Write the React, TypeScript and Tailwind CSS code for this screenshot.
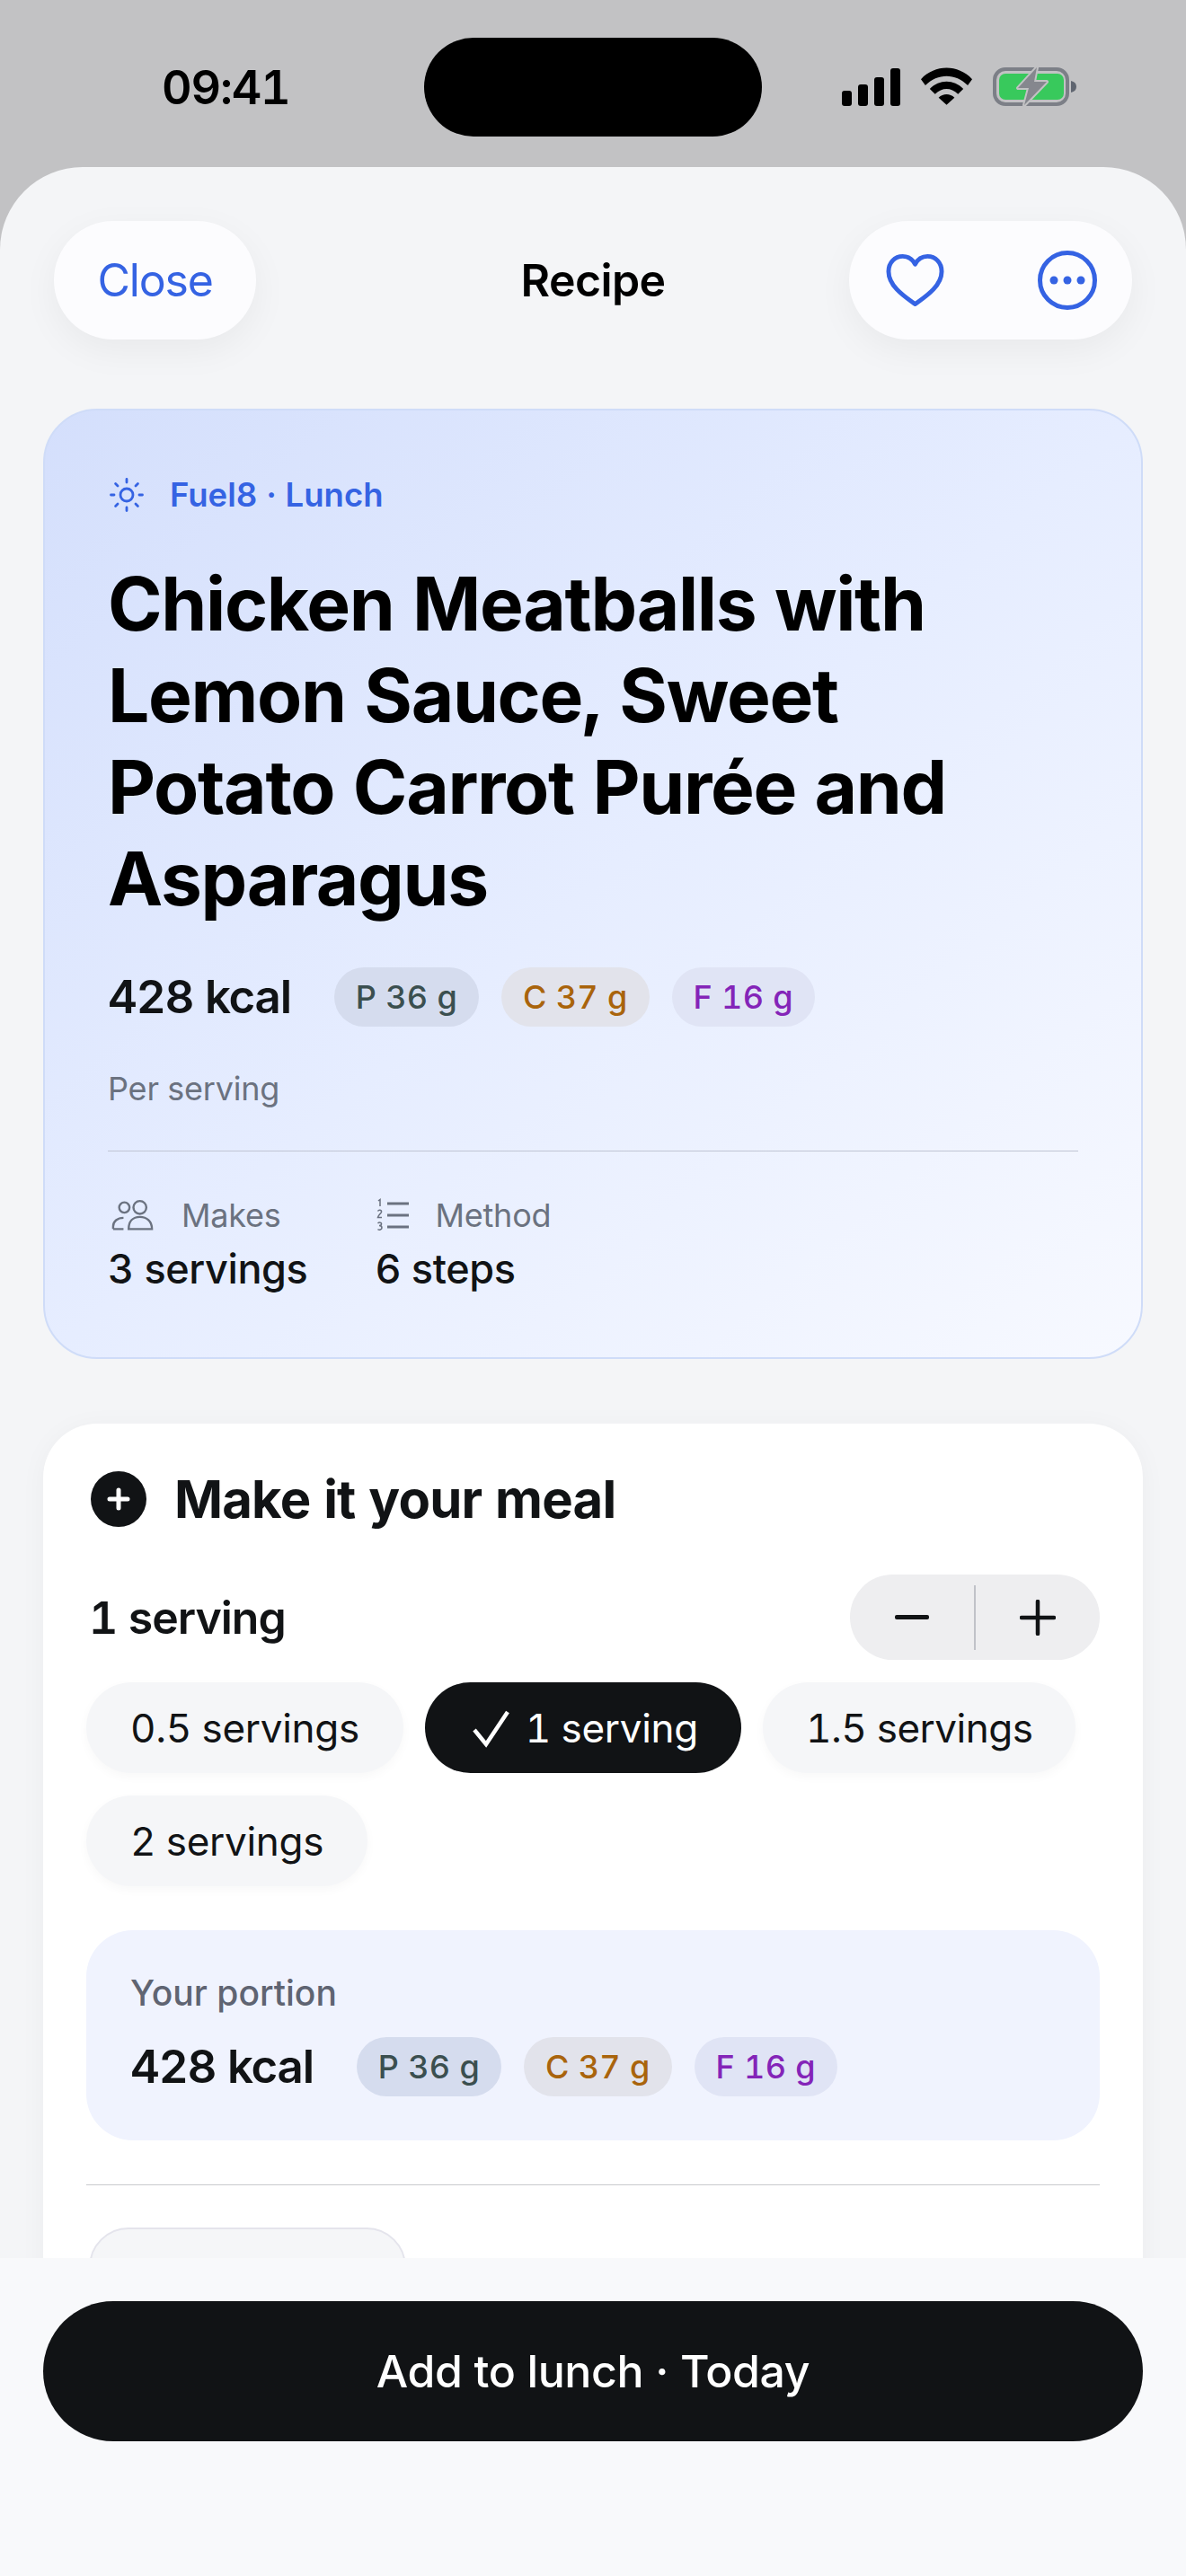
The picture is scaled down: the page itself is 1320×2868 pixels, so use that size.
import React from "react";

function Chips() {
  const base = "h-[66px] px-[24px] rounded-full flex items-center text-[36px] font-medium tracking-[0.3px]";
  return (
    <div className="flex items-center gap-[25px]">
      <span className={`${base} bg-[#d5dcee] text-[#3b4f4f]`}>P 36 g</span>
      <span className={`${base} bg-[#e2e3eb] text-[#a9640c]`}>C 37 g</span>
      <span className={`${base} bg-[#e0e4f5] text-[#8424b8]`}>F 16 g</span>
    </div>
  );
}

function Pill({ children, active, tight }: { children: React.ReactNode; active?: boolean; tight?: boolean }) {
  if (active) {
    return (
      <div className="h-[101px] pl-[52px] pr-[48px] rounded-full bg-[#111315] text-white flex items-center text-[44px] tracking-[-0.3px] gap-[16px]">
        {children}
      </div>
    );
  }
  return (
    <div
      className={
        tight
          ? "h-[101px] px-[48px] rounded-full bg-[#f5f6f8] text-[#111315] flex items-center text-[44px] tracking-[-0.5px] shadow-[0_4px_12px_rgba(0,0,0,0.03)]"
          : "h-[101px] px-[49px] rounded-full bg-[#f5f6f8] text-[#111315] flex items-center text-[44px] tracking-[-0.3px] shadow-[0_4px_12px_rgba(0,0,0,0.03)]"
      }
    >
      {children}
    </div>
  );
}

export default function App() {
  return (
    <div className="relative w-[1320px] h-[2868px] overflow-hidden bg-[#c2c2c4] font-['Inter',sans-serif] tabular-nums">
      {/* status bar */}
      <div className="h-[186px] relative flex justify-center pt-[42px]">
        <div className="w-[376px] h-[110px] rounded-full bg-black" />
        <div className="absolute left-[180px] top-[66px] text-[52px] leading-[64px] font-semibold tracking-[-1.2px] text-black">09:41</div>
        <div className="absolute left-[937px] top-[73px] flex items-start">
          <svg className="mt-[3px]" width="66" height="42" viewBox="0 0 66 42" fill="#000">
            <rect x="0" y="25" width="11" height="17" rx="3" />
            <rect x="18" y="18" width="11" height="24" rx="3" />
            <rect x="36" y="10" width="11" height="32" rx="3" />
            <rect x="54" y="0" width="11" height="42" rx="3" />
          </svg>
          <svg className="ml-[22px] mt-[2px]" width="57" height="42" viewBox="0 0 58 42" fill="#000">
            <path d="M0 13 C16 -4 42 -4 58 13 L53 20 C39 6 19 6 5 20 Z" />
            <path d="M10 24 C21 13 37 13 48 24 L42 30 C34 22 24 22 16 30 Z" />
            <path d="M20 34 C25 29 33 29 38 34 L29 42 Z" />
          </svg>
          <svg className="ml-[23px]" width="94" height="46" viewBox="0 0 94 46">
            <rect x="2" y="4" width="81" height="39" rx="12" fill="none" stroke="#7c7f87" strokeWidth="4" />
            <rect x="7" y="9" width="72" height="29" rx="7" fill="#38c95c" />
            <path d="M87 17 C91 18 93 20 93 23.5 C93 27 91 29 87 30 Z" fill="#5f6570" />
            <path d="M49 2 L28 25 L40 25 L35 44 L60 18 L46 18 Z" fill="#85878e" stroke="#c2c2c4" strokeWidth="4" strokeLinejoin="round" paintOrder="stroke" />
          </svg>
        </div>
      </div>

      {/* sheet */}
      <div className="h-[2682px] rounded-t-[92px] bg-[#f4f5f7] relative overflow-hidden">
        <div className="h-[269px] px-[60px] pt-[60px] flex justify-between items-start relative">
          <div className="w-[225px] h-[132px] rounded-full bg-[#fcfcfe] flex items-center justify-center text-[#3563e3] text-[50px] tracking-[-1.2px] shadow-[0_12px_40px_rgba(0,0,0,0.05)]">
            Close
          </div>
          <div className="absolute left-0 right-0 top-[60px] h-[132px] flex items-center justify-center text-[50px] font-semibold text-black tracking-[-0.6px]">
            Recipe
          </div>
          <div className="w-[315px] h-[132px] rounded-full bg-[#fcfcfe] flex items-center justify-between pl-[41px] pr-[39px] shadow-[0_12px_40px_rgba(0,0,0,0.05)]">
            <svg width="65" height="60" viewBox="0 0 66 60" fill="none" stroke="#3563e3" strokeWidth="5" strokeLinejoin="round">
              <path d="M33 57 C22 49 3 37 3 20 C3 10 10 3 19 3 C25 3 30 6 33 12 C36 6 41 3 47 3 C56 3 63 10 63 20 C63 37 44 49 33 57 Z" />
            </svg>
            <svg width="66" height="66" viewBox="0 0 66 66" fill="#3563e3">
              <circle cx="33" cy="33" r="30.5" fill="none" stroke="#3563e3" strokeWidth="5" />
              <circle cx="18" cy="33" r="4.5" />
              <circle cx="33" cy="33" r="4.5" />
              <circle cx="48" cy="33" r="4.5" />
            </svg>
          </div>
        </div>

        {/* hero card */}
        <div className="mx-[48px] h-[1058px] rounded-[60px] border-2 border-[#cfdcf8] bg-gradient-to-br from-[#d4dffc] via-[#e6edff] to-[#f7f9ff] px-[70px] pt-[64px]">
          <div className="flex items-center h-[60px] gap-[27px]">
            <svg width="42" height="42" viewBox="0 0 24 24" fill="none" stroke="#3563e3" strokeWidth="1.6" strokeLinecap="round">
              <circle cx="12" cy="12" r="4" />
              <path d="M12 2v2M12 20v2M2 12h2M20 12h2M4.9 4.9l1.4 1.4M17.7 17.7l1.4 1.4M4.9 19.1l1.4-1.4M17.7 6.3l1.4-1.4" />
            </svg>
            <span className="text-[36.5px] font-semibold text-[#3563e3]">Fuel8 · Lunch</span>
          </div>
          <h1 className="mt-[41px] text-[82px] leading-[102px] font-bold text-black tracking-[-1.35px]">
            Chicken Meatballs with Lemon Sauce, Sweet Potato Carrot Purée and Asparagus
          </h1>
          <div className="mt-[47px] flex items-center h-[66px] gap-[48px]">
            <span className="text-[51px] font-semibold text-[#111315] tracking-[-1.2px]">428 kcal</span>
            <Chips />
          </div>
          <div className="mt-[47px] text-[36px] leading-[44px] tracking-[-0.2px] text-[#6b7280]">Per serving</div>
          <div className="mt-[47px] h-[1px] bg-[#c0c5d4]" />
          <div className="mt-[47px] flex gap-[75px]">
            <div>
              <div className="flex items-center gap-[30px] h-[48px] pl-[4px]">
                <svg width="48" height="36" viewBox="0 0 50 36" fill="none" stroke="#6b7280" strokeWidth="2.5">
                  <circle cx="15" cy="9" r="6" />
                  <circle cx="33" cy="9" r="7.5" />
                  <path d="M2 34 v-3 C2 25 7 21 14 21 M20 34 C20 25 25 20 33 20 C41 20 47 25 47 34 Z M2 34 H14" />
                </svg>
                <span className="text-[36px] tracking-[-0.2px] text-[#6b7280]">Makes</span>
              </div>
              <div className="mt-[8px] text-[45px] leading-[56px] font-medium tracking-[-0.4px] text-[#111315]">3 servings</div>
            </div>
            <div>
              <div className="flex items-center gap-[29px] h-[48px] pl-[2px]">
                <svg width="36" height="38" viewBox="0 0 36 38" fill="none" stroke="#6b7280" strokeWidth="3">
                  <path d="M12 6 H36 M12 19 H36 M12 32 H36" />
                  <path d="M2 3 L4 1.5 V9 M1.5 14.5 C2.5 12.5 6 13 5.5 15.5 C5 17 2 19 1.5 21.5 H6 M1.5 28 C3 26.5 6 27 5.5 29 C5.4 30 4 30.5 3 30.5 C4 30.5 6 31 6 33 C6 35 3 36 1.5 34.5" strokeWidth="1.5" />
                </svg>
                <span className="text-[36px] tracking-[-0.2px] text-[#6b7280]">Method</span>
              </div>
              <div className="mt-[8px] text-[45px] leading-[56px] font-medium tracking-[-0.4px] text-[#111315]">6 steps</div>
            </div>
          </div>
        </div>

        {/* meal card */}
        <div className="mx-[48px] mt-[72px] h-[1100px] rounded-[60px] bg-white px-[48px] pt-[52px] shadow-[0_4px_30px_rgba(0,0,0,0.04)]">
          <div className="flex items-center gap-[31px] h-[64px] pl-[5px]">
            <div className="w-[62px] h-[62px] rounded-full bg-[#111315] flex items-center justify-center">
              <svg width="30" height="30" viewBox="0 0 30 30" stroke="#fff" strokeWidth="5" strokeLinecap="round">
                <path d="M15 5 V25 M5 15 H25" />
              </svg>
            </div>
            <span className="text-[58px] font-bold text-[#111315] tracking-[-0.8px]">Make it your meal</span>
          </div>
          <div className="mt-[52px] flex items-center justify-between h-[95px]">
            <span className="text-[50px] font-semibold text-[#111315] pl-[3px] pt-[2px] tracking-[-1px]">1 serving</span>
            <div className="w-[278px] h-[95px] rounded-full bg-[#eeeef0] flex items-center">
              <div className="flex-1 flex justify-center">
                <svg width="38" height="6" viewBox="0 0 38 6"><rect width="38" height="5" rx="2" fill="#111315" /></svg>
              </div>
              <div className="w-[2px] h-[72px] bg-[#c0c2c8]" />
              <div className="flex-1 flex justify-center">
                <svg width="40" height="40" viewBox="0 0 40 40" stroke="#111315" strokeWidth="4.5" strokeLinecap="round">
                  <path d="M20 2 V38 M2 20 H38" />
                </svg>
              </div>
            </div>
          </div>
          <div className="mt-[25px] flex flex-wrap gap-x-[24px] gap-y-[25px]">
            <Pill>0.5 servings</Pill>
            <Pill active>
              <svg width="44" height="44" viewBox="0 0 44 44" fill="none" stroke="#fff" strokeWidth="4.5">
                <path d="M3 24 L16 40 L40 4" />
              </svg>
              1 serving
            </Pill>
            <Pill tight>1.5 servings</Pill>
            <Pill>2 servings</Pill>
          </div>
          <div className="mt-[49px] h-[234px] rounded-[52px] bg-[#f0f3fe] px-[49px] pt-[46px]">
            <div className="text-[39px] leading-[48px] font-medium text-[#5f6472]">Your portion</div>
            <div className="mt-[20px] flex items-center gap-[48px]">
              <span className="text-[51px] font-semibold text-[#111315] tracking-[-1.2px]">428 kcal</span>
              <Chips />
            </div>
          </div>
          <div className="mt-[49px] h-[1px] bg-[#c9cacd]" />
          <div className="mt-[47px] ml-[3px] w-[353px] h-[120px] rounded-[44px] border-2 border-[#e4e4ec] bg-[#f5f6f8]" />
        </div>

        {/* footer */}
        <div className="absolute left-0 right-0 bottom-0 h-[354px] bg-[#f8f9fb] px-[48px] pt-[48px]">
          <div className="h-[156px] rounded-full bg-[#111315] text-white flex items-center justify-center text-[50px] font-medium tracking-[-0.4px]">
            Add to lunch · Today
          </div>
        </div>
      </div>
    </div>
  );
}
